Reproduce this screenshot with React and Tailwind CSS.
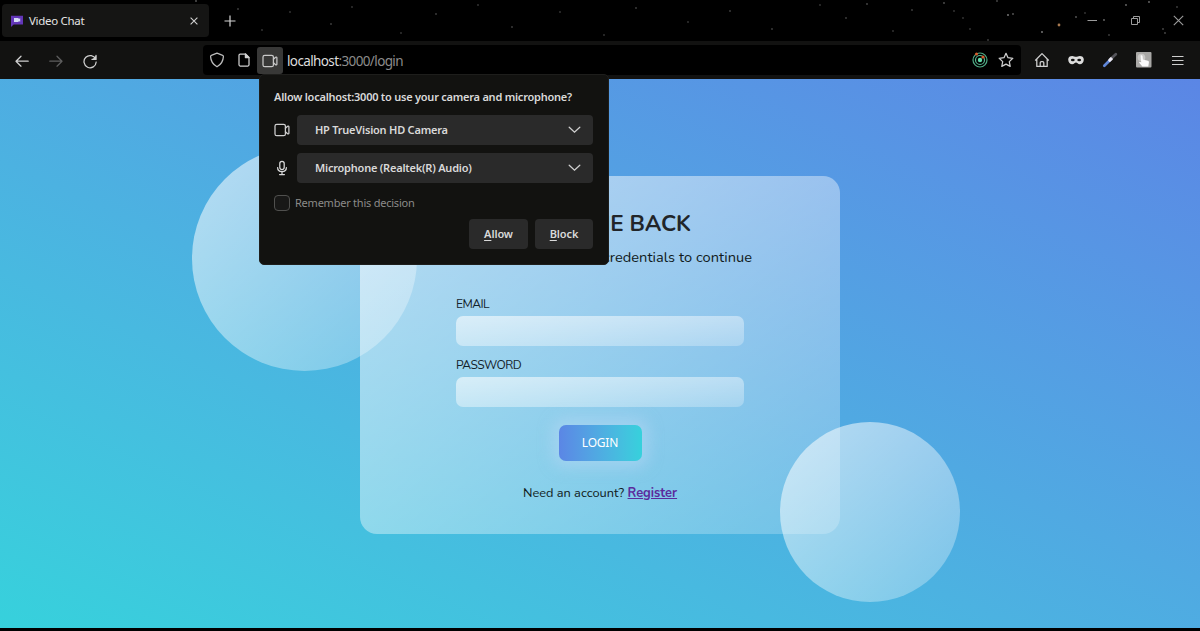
import React from "react";

const STARS = [
  [196, 1, 0.5], [238, 9, 0.35], [262, 30, 0.3], [290, 12, 0.3], [331, 24, 0.35], [352, 7, 0.3], [401, 33, 0.3],
  [436, 14, 0.35], [478, 5, 0.3], [512, 27, 0.35], [560, 12, 0.3], [604, 35, 0.3], [636, 8, 0.35], [688, 22, 0.3],
  [730, 11, 0.35], [772, 29, 0.35], [820, 5, 0.3], [846, 18, 0.35], [867, 4, 0.4], [893, 31, 0.3], [912, 10, 0.35],
  [944, 3, 0.45], [954, 11, 0.3], [963, 18, 0.3], [970, 29, 0.3], [997, 1, 0.4], [1008, 15, 0.7], [1013, 14, 0.5],
  [1042, 32, 0.7], [1076, 17, 0.5], [1085, 13, 0.3], [1104, 20, 0.6], [1109, 35, 0.35], [1126, 5, 0.6],
  [1149, 2, 0.6], [1163, 29, 0.4], [1165, 33, 0.4], [1177, 7, 0.35], [988, 40, 0.35],
];

function Stars() {
  return (
    <svg className="pointer-events-none absolute inset-0" width="1200" height="41">
      {STARS.map(([x, y, o]) => (
        <circle key={`${x}-${y}`} cx={x} cy={y} r="0.9" fill="#b8b8b8" opacity={o} />
      ))}
      <circle cx="1059" cy="25" r="1.4" fill="#a87a50" />
    </svg>
  );
}

function Icon({ size = 16, className = "", children }) {
  return (
    <svg
      width={size}
      height={size}
      viewBox="0 0 16 16"
      fill="none"
      stroke="currentColor"
      strokeWidth="1.25"
      strokeLinecap="round"
      strokeLinejoin="round"
      className={`shrink-0 ${className}`}
    >
      {children}
    </svg>
  );
}

function CameraIcon({ size, className }) {
  return (
    <Icon size={size} className={className}>
      <rect x="1" y="2.3" width="10.4" height="11.400" rx="1.8" />
      <path d="M11.400 6.200l2.200-2c.5-.4 1.300-.1 1.300.5v6.600c0 .6-.8.9-1.300.5l-2.200-2" />
    </Icon>
  );
}

function TabBar() {
  return (
    <div className="relative flex h-[41px] shrink-0 items-start bg-black">
      <div className="ml-0.5 mt-1 flex h-[33px] w-[207px] items-center rounded bg-[#151514] pl-[9px] pr-[10px]">
        <svg width="12" height="12" viewBox="0 0 12 12" className="mr-1.5">
          <path d="M0 .8h12v8.7H2.600L0 12z" fill="#6236b8" />
          <path d="M3 3h4.600v1l1.600-.8v3.600l-1.600-.8v1H3z" fill="#d5dcf6" />
        </svg>
        <span className="grow text-[11.5px] tracking-[-0.3px] text-[#e4e4e4]">Video Chat</span>
        <svg width="10" height="10" viewBox="0 0 10 10" stroke="#d0d0d0" strokeWidth="1.1">
          <path d="M1.600 1.600l6.800 6.800M8.400 1.600L1.600 8.400" />
        </svg>
      </div>
      <svg width="12" height="12" viewBox="0 0 12 12" stroke="#d4d4d4" strokeWidth="1.200" className="ml-[15px] mt-[15px]">
        <path d="M6 .5v11M.5 6h11" />
      </svg>
      <div className="ml-auto mr-4 mt-[15px] flex items-center gap-8 text-[#9c9c9c]">
        <svg width="11" height="11" viewBox="0 0 11 11" stroke="currentColor">
          <path d="M.5 5.500h9.500" />
        </svg>
        <svg width="11" height="11" viewBox="0 0 11 11" fill="none" stroke="currentColor">
          <path d="M1.500 3.500h6v6h-6zM3.500 3.300V1.500h6v6H7.700" />
        </svg>
        <svg width="11" height="11" viewBox="0 0 11 11" stroke="currentColor" strokeWidth="1.1">
          <path d="M.8.8l9.400 9.400M10.200.8L.8 10.200" />
        </svg>
      </div>
      <Stars />
    </div>
  );
}

function Toolbar() {
  return (
    <div className="flex h-[38px] shrink-0 items-center bg-[#121211] text-[#d0d0d0]">
      <div className="flex w-[203px] items-center gap-[18px] pl-[14px] pt-px">
        <Icon>
          <path d="M14.200 8.200H2M7 3.200l-5 5 5 5" />
        </Icon>
        <Icon className="text-[#5e5e5e]">
          <path d="M1.800 8.200H14M9 3.200l5 5-5 5" />
        </Icon>
        <Icon>
          <path d="M13.700 6.200A6.100 6.100 0 1 0 14.200 9M14 2.400v4h-4" />
          <path d="M14.200 2.400v4.300h-4.300z" fill="currentColor" stroke="none" />
        </Icon>
      </div>
      <div className="flex h-[30px] w-[818px] items-center rounded bg-black">
        <Icon className="ml-[6px] text-[#bcbcbc]">
          <path d="M8 1.200l5.700 2.100c.6.2.7.7.7 1.300-.2 4.600-2.600 8-6.400 10.200C4.200 12.600 1.800 9.200 1.600 4.600c0-.6.1-1.100.7-1.300z" />
        </Icon>
        <Icon className="ml-[11px] text-[#d0d0d0]">
          <path d="M9.500 2H4.200c-.8 0-1.200.4-1.200 1.200v9.600c0 .8.4 1.200 1.200 1.200h7.600c.8 0 1.200-.4 1.200-1.200V5.500z" />
          <path d="M9.400 2v3.600H13z" fill="currentColor" />
        </Icon>
        <div className="ml-[5px] mt-px flex h-[27px] w-[26px] items-center justify-center rounded-[3px] bg-[#383837]">
          <CameraIcon size={16} className="text-[#c8c8c8]" />
        </div>
        <span className="ml-1 mt-0.5 text-[13.5px] tracking-[-0.62px] text-[#8c8c8c]">
          <span className="text-[#dcdcdc]">localhost</span>:3000/login
        </span>
        <svg width="16" height="16" viewBox="0 0 16 16" fill="none" className="ml-auto mr-[10px]">
          <circle cx="8" cy="8" r="7" stroke="#4faa84" strokeWidth="1.200" />
          <circle cx="8" cy="8" r="4.500" stroke="#55b890" strokeWidth="1.200" />
          <circle cx="8" cy="8" r="2.200" fill="#63dba9" />
          <circle cx="4.500" cy="2" r="1.500" fill="#d85c2c" />
          <circle cx="11" cy="5" r="1.600" fill="#d85c2c" />
        </svg>
        <Icon className="mr-[7px] text-[#cfcfcf]">
          <path d="M8 1.300l2 4.400 4.800.6-3.500 3.300.9 4.800L8 12.100l-4.200 2.300.9-4.800L1.200 6.300 6 5.700z" />
        </Icon>
      </div>
      <div className="flex grow items-center gap-[18px] pl-[13px]">
        <Icon>
          <path d="M1.500 8.200L8 1.600l6.500 6.600M2.800 7v7.400h10.400V7M6.200 14.200v-3.500c0-.7.400-1.100 1.100-1.100h1.400c.7 0 1.100.4 1.100 1.100v3.500" />
        </Icon>
        <svg width="16" height="16" viewBox="0 0 16 16">
          <path
            d="M.2 7.500C.2 4.800 2 3.900 4.200 3.900c1.600 0 2.500.8 3.800.8s2.200-.8 3.800-.8c2.200 0 4 .9 4 3.600 0 3-1.900 4.700-4 4.700-1.900 0-2.700-1.700-3.800-1.700s-1.900 1.700-3.800 1.700C2.100 12.200.2 10.500.2 7.500z"
            fill="#dcdcdc"
          />
          <ellipse cx="4.800" cy="8" rx="1.900" ry="1.300" fill="#121211" />
          <ellipse cx="11.200" cy="8" rx="1.900" ry="1.300" fill="#121211" />
        </svg>
        <svg width="16" height="16" viewBox="0 0 16 16" fill="none" strokeLinecap="round">
          <path d="M2.300 13.700l5.500-5.500" stroke="#5f86d8" strokeWidth="2.700" />
          <path d="M7.800 8.200l1.700-1.700" stroke="#eceaf4" strokeWidth="3.200" />
          <path d="M10.800 5l3-2.800" stroke="#55555b" strokeWidth="2.800" />
        </svg>
        <svg width="16" height="16" viewBox="0 0 16 16">
          <rect width="15.500" height="15.500" rx="1" fill="#a9a8a6" />
          <circle cx="5.500" cy="5.500" r="3.800" fill="#c9c8c6" />
          <path d="M4.600 3.500c1-.7 1.900 0 2 .8l.3 3.200 5 1.300c.9.300 1.100.9 1 1.700l-.6 4H6.400L3 10.500c.4-1 1.300-.8 2.200-.1z" fill="#fafafa" />
        </svg>
        <svg width="12" height="11" viewBox="0 0 12 11" stroke="#cecece" strokeWidth="1.200" className="ml-0.5">
          <path d="M0 1.500h11.500M0 5.500h11.500M0 9.500h11.500" />
        </svg>
      </div>
    </div>
  );
}

function DeviceSelect({ children }) {
  return (
    <div className="flex h-[30px] grow items-center justify-between rounded bg-[#2a2a2a] pl-[18px] pr-3 text-[11px] font-semibold tracking-[-0.22px] text-[#d9d9d9]">
      {children}
      <svg width="13" height="8" viewBox="0 0 13 8" fill="none" stroke="#d0d0d0" strokeWidth="1.300" strokeLinecap="round">
        <path d="M1.200 1.200l5.300 5 5.300-5" />
      </svg>
    </div>
  );
}

function PermissionPopup() {
  return (
    <div className="absolute left-[259px] top-[74px] z-10 h-[191px] w-[350px] rounded-[5px] border border-[#1e1e1c] bg-[#121210] pl-[14px] pr-[15px] pt-[14px] text-[#d9d9d9]">
      <p className="whitespace-nowrap text-[11px] font-semibold leading-4 tracking-[-0.24px]">
        Allow localhost:3000 to use your camera and microphone?
      </p>
      <div className="mt-[10px] flex items-center gap-[7px]">
        <CameraIcon size={16} className="text-[#cfcfcf]" />
        <DeviceSelect>HP TrueVision HD Camera</DeviceSelect>
      </div>
      <div className="mt-[8px] flex items-center gap-[7px]">
        <Icon size={16}>
          <rect x="5.800" y="1.300" width="4.400" height="8.200" rx="2.200" />
          <path d="M3.600 7.500c0 5.400 8.800 5.400 8.800 0M8 11.700v2.700M5.600 14.500h4.800" />
        </Icon>
        <DeviceSelect>Microphone (Realtek(R) Audio)</DeviceSelect>
      </div>
      <div className="mt-[12px] flex items-center gap-[5px]">
        <span className="size-4 rounded-sm border border-[#50504e] bg-[#181817]" />
        <span className="text-[11px] leading-4 tracking-[-0.23px] text-[#8b8b89]">Remember this decision</span>
      </div>
      <div className="mt-[8px] flex justify-end gap-[7px] text-[11px] font-semibold tracking-[-0.1px]">
        <button className="h-[30px] w-[59px] rounded bg-[#2a2a2a] pt-px">
          <span className="underline underline-offset-2">A</span>llow
        </button>
        <button className="h-[30px] w-[58px] rounded bg-[#2a2a2a] pt-px">
          <span className="underline underline-offset-2">B</span>lock
        </button>
      </div>
    </div>
  );
}

function Field({ label }) {
  return (
    <label className="block">
      <span className="block text-[12px] leading-4 tracking-[-0.5px] text-[#14232c]">{label}</span>
      <span className="mt-1 block h-[30px] rounded-[7px] bg-linear-to-br from-white/60 to-white/25" />
    </label>
  );
}

function LoginCard() {
  return (
    <div className="mt-0.5 h-[358px] w-[480px] rounded-[17px] bg-linear-to-br from-white/60 to-white/20 px-24 pt-[31px] font-['Nunito','Open_Sans',sans-serif]">
      <h1 className="text-center text-[22.4px] font-bold leading-[34px] tracking-[-0.1px] text-[#212529]">WELCOME BACK</h1>
      <p className="-mx-4 mt-2 whitespace-nowrap pr-[8px] text-right text-[14.6px] leading-4 tracking-[0.03px] text-[#101a20]">
        Please enter your login credentials to continue
      </p>
      <div className="mt-[31px] flex flex-col gap-[11px]">
        <Field label="EMAIL" />
        <Field label="PASSWORD" />
      </div>
      <button className="mx-auto mt-[18px] block h-9 w-[83px] rounded-[7px] bg-linear-to-r from-[#5b86e5] to-[#36d1dc] font-['Noto_Sans',sans-serif] text-[12px] tracking-[-0.2px] text-white shadow-[0_0_14px_7px_rgba(182,215,245,0.5)]">
        LOGIN
      </button>
      <p className="mt-6 text-center text-[12.8px] leading-4 text-[#101a20]">
        Need an account? <a className="font-bold text-[#5b2a9c] underline">Register</a>
      </p>
    </div>
  );
}

export default function App() {
  return (
    <div className="relative flex h-[631px] w-[1200px] flex-col overflow-hidden bg-black font-['Segoe_UI','Noto_Sans',sans-serif]">
      <TabBar />
      <Toolbar />
      <main className="relative flex h-[549px] shrink-0 items-center justify-center bg-linear-to-tr from-[#36d1dc] to-[#5b86e5]">
        <div className="absolute left-[192px] top-[67px] size-[225px] rounded-full bg-linear-to-br from-white/60 to-white/25" />
        <LoginCard />
        <div className="absolute left-[780px] top-[343px] size-[180px] rounded-full bg-linear-to-br from-white/60 to-white/25" />
      </main>
      <PermissionPopup />
    </div>
  );
}
